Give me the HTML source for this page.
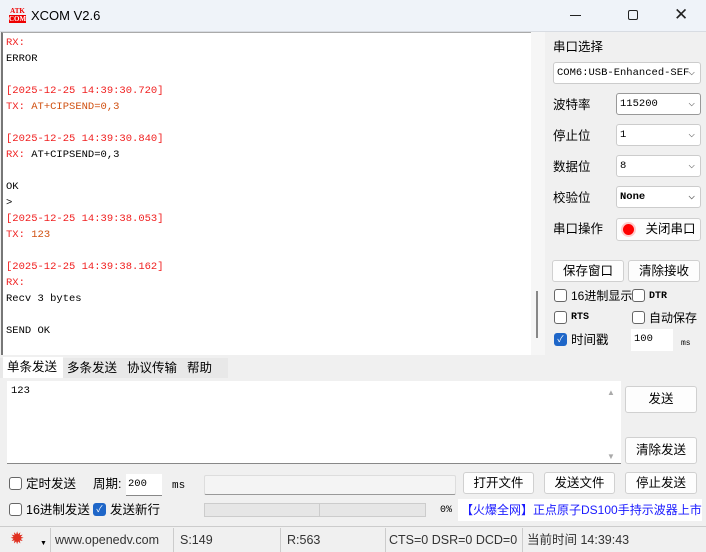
<!DOCTYPE html>
<html><head><meta charset="utf-8"><style>
*{margin:0;padding:0;box-sizing:border-box}
body{width:706px;height:552px;background:#f0f0f0;font-family:"Liberation Sans","Noto Sans CJK SC",sans-serif;font-size:12px;color:#000;position:relative;overflow:hidden;line-height:14px}
.a{position:absolute}
.title{left:0;top:0;width:706px;height:32px;background:#eff3f9;border-bottom:1px solid #d8dce2}
.rx{left:1px;top:32px;width:530px;height:323px;background:#fff;border-left:2px solid #777;border-top:1px solid #aaa;font-family:"Liberation Mono","Noto Sans CJK SC",monospace;font-size:10.5px;line-height:16px;padding:2px 0 0 3px;white-space:pre}
.r{color:#f02020}.o{color:#d05010}
.lbl{font-size:12.5px}
.sel{background:#fff;border:1px solid #ccc;border-radius:3px;height:22px;font-family:"Liberation Mono",monospace;font-size:10.5px;padding:0 0 0 3px;line-height:20px}
.sel:after{content:"⌵";position:absolute;right:5px;top:0;color:#666;font-size:11px}
.btn{background:#fdfdfd;border:1px solid #d0d0d0;border-radius:3px;text-align:center;font-size:12.5px}
.cb{width:13px;height:13px;border:1px solid #666;border-radius:3px;background:#fff}
.cbc{width:13px;height:13px;border-radius:3px;background:#1e66c8;color:#fff;font-size:9px;text-align:center;line-height:13px}
.st{top:528px;height:24px;border-left:1px solid #ccc;font-size:12.5px;line-height:24px}
</style></head><body>
<div class="a title">
 <div class="a" style="left:9px;top:7px;width:17px;height:17px;font-size:7px;font-weight:bold;color:#e00;line-height:8px;text-align:center;font-family:'Liberation Serif',serif">ATK<br><span style="background:#e00;color:#fff">COM</span></div>
 <div class="a" style="left:31px;top:9px;font-size:13px">XCOM V2.6</div>
 <div class="a" style="left:570px;top:15px;width:11px;height:1px;background:#222"></div>
 <div class="a" style="left:628px;top:10px;width:10px;height:10px;border:1px solid #222;border-radius:2px"></div>
 <div class="a" style="left:674px;top:8px;font-size:17px;color:#222">✕</div>
</div>
<div class="a rx"><span class="r">RX:</span>
ERROR

<span class="r">[2025-12-25 14:39:30.720]</span>
<span class="r">TX:</span> <span class="o">AT+CIPSEND=0,3</span>

<span class="r">[2025-12-25 14:39:30.840]</span>
<span class="r">RX:</span> AT+CIPSEND=0,3

OK
&gt;
<span class="r">[2025-12-25 14:39:38.053]</span>
<span class="r">TX:</span> <span class="o">123</span>

<span class="r">[2025-12-25 14:39:38.162]</span>
<span class="r">RX:</span>
Recv 3 bytes

SEND OK</div>
<div class="a" style="left:531px;top:32px;width:14px;height:323px;background:#f6f6f6"></div>
<div class="a" style="left:536px;top:291px;width:2px;height:47px;background:#888"></div>

<div class="a lbl" style="left:553px;top:40px">串口选择</div>
<div class="a sel" style="left:553px;top:62px;width:148px">COM6:USB-Enhanced-SEF</div>
<div class="a lbl" style="left:553px;top:98px">波特率</div>
<div class="a sel" style="left:616px;top:93px;width:85px;border-color:#999">115200</div>
<div class="a lbl" style="left:553px;top:129px">停止位</div>
<div class="a sel" style="left:616px;top:124px;width:85px">1</div>
<div class="a lbl" style="left:553px;top:160px">数据位</div>
<div class="a sel" style="left:616px;top:155px;width:85px">8</div>
<div class="a lbl" style="left:553px;top:191px">校验位</div>
<div class="a sel" style="left:616px;top:186px;width:85px;font-weight:bold">None</div>
<div class="a lbl" style="left:553px;top:222px">串口操作</div>
<div class="a btn" style="left:616px;top:218px;width:85px;height:23px;padding-left:24px;line-height:21px">关闭串口</div>
<div class="a" style="left:621px;top:222px;width:15px;height:15px;border-radius:50%;background:#f00;border:2px solid #fcc"></div>
<div class="a btn" style="left:552px;top:260px;width:72px;height:22px;line-height:20px">保存窗口</div>
<div class="a btn" style="left:628px;top:260px;width:72px;height:22px;line-height:20px">清除接收</div>
<div class="a cb" style="left:554px;top:289px"></div><div class="a" style="left:571px;top:289px;font-size:12px">16进制显示</div>
<div class="a cb" style="left:632px;top:289px"></div><div class="a" style="left:649px;top:290px;font-size:10px;font-family:'Liberation Mono';font-weight:bold">DTR</div>
<div class="a cb" style="left:554px;top:311px"></div><div class="a" style="left:571px;top:311px;font-size:10px;font-family:'Liberation Mono';font-weight:bold">RTS</div>
<div class="a cb" style="left:632px;top:311px"></div><div class="a" style="left:649px;top:311px;font-size:12px">自动保存</div>
<div class="a cbc" style="left:554px;top:333px">✓</div><div class="a" style="left:571px;top:333px;font-size:12.5px">时间戳</div>
<div class="a" style="left:631px;top:329px;width:42px;height:22px;background:#fff;font-size:10.5px;font-family:'Liberation Mono';padding-left:3px;line-height:20px">100</div>
<div class="a" style="left:681px;top:337px;font-size:8px;font-family:'Liberation Mono'">ms</div>

<div class="a" style="left:0;top:358px;width:228px;height:20px;background:#e8e8e8"></div>
<div class="a" style="left:3px;top:357px;width:60px;height:21px;background:#fff;font-size:12.5px;padding-left:4px;line-height:20px">单条发送</div>
<div class="a" style="left:67px;top:361px;font-size:12.5px">多条发送</div>
<div class="a" style="left:127px;top:361px;font-size:12.5px">协议传输</div>
<div class="a" style="left:187px;top:361px;font-size:12.5px">帮助</div>
<div class="a" style="left:7px;top:381px;width:614px;height:83px;background:#fff;border-bottom:1px solid #888;font-family:'Liberation Mono';font-size:10.5px;padding:3px 0 0 4px">123</div>
<div class="a" style="left:607px;top:386px;font-size:8px;color:#aaa">▲</div>
<div class="a" style="left:607px;top:450px;font-size:8px;color:#aaa">▼</div>
<div class="a btn" style="left:625px;top:386px;width:72px;height:27px;line-height:25px">发送</div>
<div class="a btn" style="left:625px;top:437px;width:72px;height:27px;line-height:25px">清除发送</div>

<div class="a cb" style="left:9px;top:477px"></div><div class="a" style="left:26px;top:477px;font-size:12.5px">定时发送</div>
<div class="a" style="left:93px;top:477px;font-size:12.5px">周期:</div>
<div class="a" style="left:126px;top:474px;width:36px;height:22px;background:#fff;font-size:10.5px;font-family:'Liberation Mono';padding-left:2px;line-height:20px;border-bottom:1px solid #888">200</div>
<div class="a" style="left:172px;top:479px;font-size:11px;font-family:'Liberation Mono'">ms</div>
<div class="a" style="left:204px;top:475px;width:252px;height:20px;background:#f4f4f4;border:1px solid #ddd;border-bottom-color:#999;border-radius:2px"></div>
<div class="a btn" style="left:463px;top:472px;width:71px;height:22px;line-height:20px">打开文件</div>
<div class="a btn" style="left:544px;top:472px;width:71px;height:22px;line-height:20px">发送文件</div>
<div class="a btn" style="left:625px;top:472px;width:72px;height:22px;line-height:20px">停止发送</div>

<div class="a cb" style="left:9px;top:503px"></div><div class="a" style="left:26px;top:503px;font-size:12.5px">16进制发送</div>
<div class="a cbc" style="left:93px;top:503px">✓</div><div class="a" style="left:110px;top:503px;font-size:12.5px">发送新行</div>
<div class="a" style="left:204px;top:503px;width:116px;height:14px;background:#e6e6e6;border:1px solid #ccc"></div>
<div class="a" style="left:320px;top:503px;width:106px;height:14px;background:#e6e6e6;border:1px solid #ccc;border-left:0"></div>
<div class="a" style="left:440px;top:504px;font-size:10px;font-family:'Liberation Mono'">0%</div>
<div class="a" style="left:458px;top:499px;width:244px;height:22px;background:#fff;color:#1a1aff;font-size:12px;padding-left:3px;line-height:22px;white-space:nowrap;overflow:hidden">【火爆全网】正点原子DS100手持示波器上市</div>

<div class="a" style="left:0;top:526px;width:706px;height:1px;background:#ccc"></div>
<div class="a" style="left:10px;top:532px;font-size:17px;color:#e03020">✹</div>
<div class="a" style="left:40px;top:537px;font-size:7px">▼</div>
<div class="a st" style="left:50px;padding-left:4px;color:#333">www.openedv.com</div>
<div class="a st" style="left:173px;padding-left:6px;color:#333">S:149</div>
<div class="a st" style="left:280px;padding-left:6px;color:#333">R:563</div>
<div class="a st" style="left:385px;padding-left:3px;color:#333">CTS=0 DSR=0 DCD=0</div>
<div class="a st" style="left:522px;padding-left:4px;color:#333">当前时间 14:39:43</div>
</body></html>
